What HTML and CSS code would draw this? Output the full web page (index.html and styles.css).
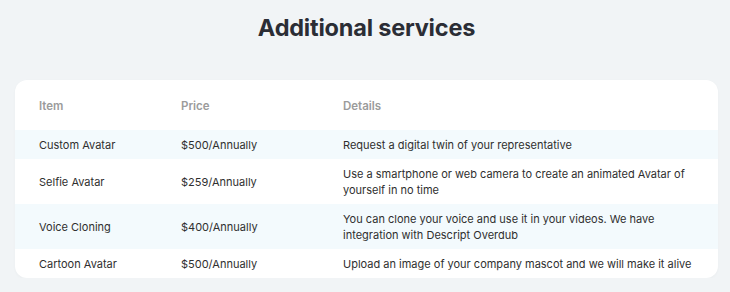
FILE: index.html
```html
<!DOCTYPE html>
<html lang="en">
<head>
    <meta charset="UTF-8">
    <meta name="viewport" content="width=device-width, initial-scale=1.0">
    <title>Additional services</title>
    <link rel="stylesheet" href="styles.css">
</head>
<body>
    <h1 class="title">Additional services</h1>
    <div class="services">
        <div class="row head">
            <span>Item</span>
            <span>Price</span>
            <span>Details</span>
        </div>
        <div class="row tint">
            <span>Custom Avatar</span>
            <span>$500/Annually</span>
            <span>Request a digital twin of your representative</span>
        </div>
        <div class="row">
            <span>Selfie Avatar</span>
            <span>$259/Annually</span>
            <span>Use a smartphone or web camera to create an animated Avatar of yourself in no time</span>
        </div>
        <div class="row tint">
            <span>Voice Cloning</span>
            <span>$400/Annually</span>
            <span>You can clone your voice and use it in your videos. We have integration with Descript Overdub</span>
        </div>
        <div class="row">
            <span>Cartoon Avatar</span>
            <span>$500/Annually</span>
            <span>Upload an image of your company mascot and we will make it alive</span>
        </div>
    </div>
</body>
</html>
```

FILE: styles.css
```css
body {
    margin: 0;
    padding: 13px 12px 0 15px;
    background: #f1f4f6;
    font-family: 'Inter', 'Liberation Sans', sans-serif;
    color: #2f2f2f;
}

.title {
    margin: 0 0 37px;
    text-align: center;
    font-size: 23.5px;
    line-height: 30px;
    font-weight: 700;
    color: #2b2d35;
    letter-spacing: -0.2px;
}

.services {
    background: #ffffff;
    border-radius: 12px;
    overflow: hidden;
    box-shadow: 0 1px 3px rgba(0, 0, 0, 0.03);
}

.row {
    display: grid;
    grid-template-columns: 142px 162px 1fr;
    align-items: center;
    padding: 6.5px 20px 6.5px 24px;
    font-size: 11px;
    line-height: 16px;
}

.row.head {
    height: 50px;
    box-sizing: border-box;
    padding-top: 5px;
    padding-bottom: 4px;
    font-size: 11.5px;
    font-weight: 600;
    color: #9b9b9b;
}

.row.tint {
    background: #f3fafd;
}
```
